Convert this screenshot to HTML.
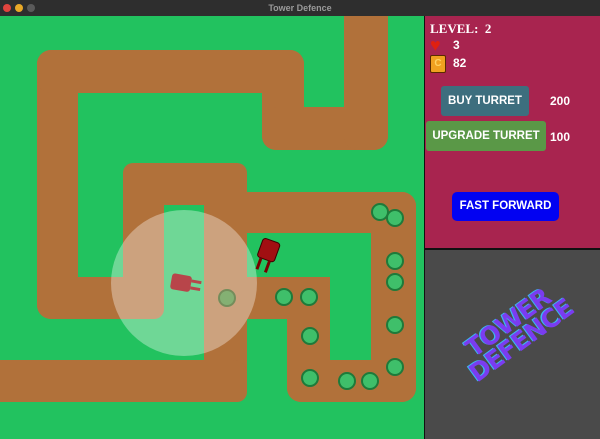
<!DOCTYPE html>
<html><head><style>
body{margin:0;width:600px;height:439px;overflow:hidden;background:#2b2b2b;font-family:"Liberation Sans",sans-serif;position:relative}
.tb{position:absolute;left:0;top:0;width:600px;height:16px;background:#2e2e2e;color:#9a9a9a;font-size:9px;font-weight:bold;text-align:center;line-height:16px}
.dot{position:absolute;top:4px;width:8px;height:8px;border-radius:50%}
.panel{position:absolute;left:424px;top:16px;width:176px;height:234px;background:#a8244f;border-left:1px solid #111;border-bottom:2px solid #111;box-sizing:border-box}
.gray{position:absolute;left:424px;top:250px;width:176px;height:189px;background:#4a4a4a;border-left:1px solid #111;box-sizing:border-box}
.t{position:absolute;color:#fff;font-weight:bold;font-size:12px}
.btn{position:absolute;color:#fff;font-weight:bold;font-size:11.5px;text-align:center;border-radius:3px}
</style></head><body>
<div class="tb">Tower Defence
<div class="dot" style="left:3px;background:#e0443e"></div>
<div class="dot" style="left:15px;background:#e9a928"></div>
<div class="dot" style="left:27px;background:#5a5a5a"></div></div>
<svg style="position:absolute;left:0;top:16px" width="424" height="423" viewBox="0 16 424 423">
<rect x="0" y="16" width="424" height="423" fill="#22c25f"/>
<g fill="#b1713a">
<rect x="204" y="163" width="43" height="239" rx="10"/>
<rect x="123" y="163" width="124" height="42" rx="14"/>
<rect x="123" y="163" width="41" height="156" rx="10"/>
<rect x="37" y="277" width="127" height="42" rx="14"/>
<rect x="37" y="50" width="41" height="269" rx="14"/>
<rect x="37" y="50" width="267" height="43" rx="14"/>
<rect x="262" y="50" width="42" height="100" rx="14"/>
<rect x="262" y="107" width="126" height="43" rx="14"/>
<rect x="344" y="0" width="44" height="150" rx="14"/>
<rect x="204" y="192" width="212" height="41" rx="14"/>
<rect x="371" y="192" width="45" height="210" rx="14"/>
<rect x="287" y="360" width="129" height="42" rx="14"/>
<rect x="287" y="277" width="43" height="125" rx="14"/>
<rect x="204" y="277" width="126" height="42"/>
<rect x="0" y="360" width="247" height="42" rx="14"/>
<rect x="0" y="360" width="220" height="42"/>
<rect x="204" y="192" width="43" height="41"/>
</g>
<circle cx="184" cy="283" r="73" fill="#fff" opacity="0.35"/>
<g fill="#3fbf6a" stroke="#1e7a3a" stroke-width="2">
<circle cx="380" cy="212" r="8"/><circle cx="395" cy="218" r="8"/>
<circle cx="395" cy="261" r="8"/><circle cx="395" cy="282" r="8"/>
<circle cx="395" cy="325" r="8"/><circle cx="395" cy="367" r="8"/>
<circle cx="284" cy="297" r="8"/><circle cx="309" cy="297" r="8"/>
<circle cx="310" cy="336" r="8"/><circle cx="310" cy="378" r="8"/>
<circle cx="347" cy="381" r="8"/><circle cx="370" cy="381" r="8"/>
<circle cx="227" cy="298" r="8" opacity="0.5"/>
</g>
<g transform="translate(183,283) rotate(10)"><rect x="-12" y="-8" width="20" height="16" rx="3" fill="#b8454a"/><rect x="8" y="-5" width="10" height="3" fill="#b8454a"/><rect x="8" y="2" width="10" height="3" fill="#b8454a"/></g>
<g transform="translate(268,252) rotate(-70)"><rect x="-8" y="-9" width="20" height="18" rx="3" fill="#a10f12" stroke="#3a0000"/><rect x="-20" y="-6" width="12" height="3" fill="#700"/><rect x="-20" y="3" width="12" height="3" fill="#700"/></g>
</svg>
<div class="panel"></div>
<div class="gray"></div>
<div class="t" style="left:430px;top:21px;font-family:'Liberation Serif',serif;font-size:13px">LEVEL:&nbsp; 2</div>
<div class="t" style="left:430px;top:36px;color:#e02010;font-size:18px;line-height:18px">♥</div>
<div class="t" style="left:453px;top:38px">3</div>
<div style="position:absolute;left:430px;top:55px;width:14px;height:16px;background:#f0a020;border:1px solid #5a2a00;border-radius:2px;color:#ffd060;font-size:10px;font-weight:bold;text-align:center;line-height:16px">C</div>
<div class="t" style="left:453px;top:56px">82</div>
<div class="btn" style="left:441px;top:86px;width:88px;height:30px;line-height:30px;background:#3d6e7e">BUY TURRET</div>
<div class="t" style="left:550px;top:94px">200</div>
<div class="btn" style="left:426px;top:121px;width:120px;height:30px;line-height:30px;background:#5a9847">UPGRADE TURRET</div>
<div class="t" style="left:550px;top:130px">100</div>
<div class="btn" style="left:452px;top:192px;width:107px;height:29px;line-height:29px;background:#0202f2;border-radius:5px">FAST FORWARD</div>
<div style="position:absolute;left:450px;top:310px;width:130px;transform:rotate(-36deg);transform-origin:center;text-align:center;font-family:'DejaVu Sans',sans-serif;font-weight:bold;color:#7a3cf0;font-size:25px;line-height:22px;text-shadow:-1px -1px 0 #3bb8f0;letter-spacing:-1px">TOWER<br>DEFENCE</div>
</body></html>
